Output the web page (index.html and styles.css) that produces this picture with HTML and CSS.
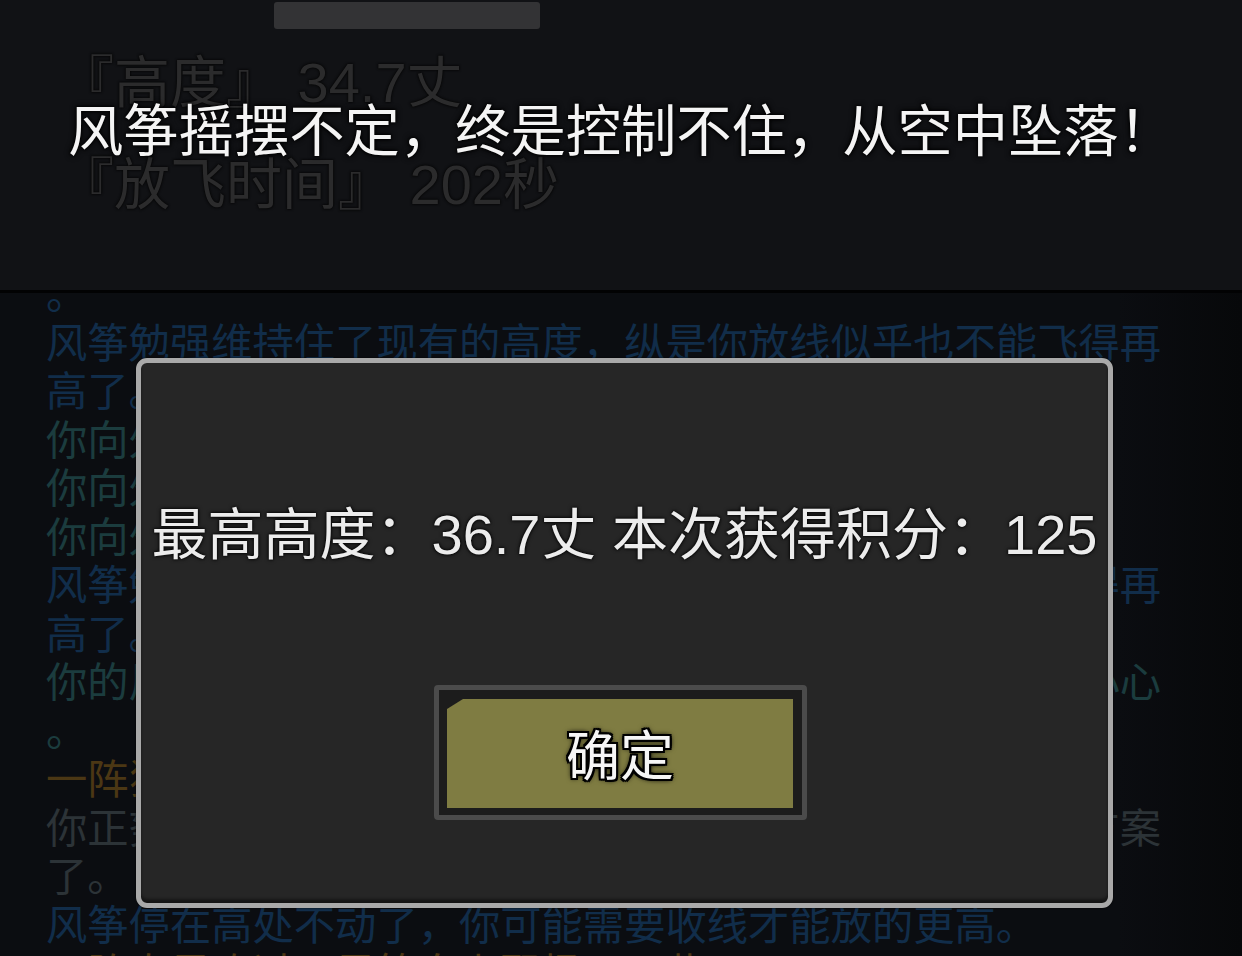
FILE: index.html
```html
<!DOCTYPE html>
<html lang="zh-CN">
<head>
<meta charset="utf-8">
<title>放风筝</title>
<link rel="stylesheet" href="styles.css">
</head>
<body>
<div class="screen">
  <section class="top">
    <div class="handle"></div>
    <div class="stats">
      <div class="stat">『高度』 34.7丈</div>
      <div class="stat">『放飞时间』 202秒</div>
    </div>
    <div class="toast">风筝摇摆不定，终是控制不住，从空中坠落！</div>
  </section>
  <div class="divider"></div>
  <section class="log">
    <div class="log-inner">
      <div class="line blue">。</div>
      <div class="line blue">风筝勉强维持住了现有的高度，纵是你放线似乎也不能飞得再</div>
      <div class="line blue">高了。</div>
      <div class="line teal">你向外放出了一截风筝线。</div>
      <div class="line teal">你向外放出了一截风筝线。</div>
      <div class="line teal">你向外放出了一截风筝线。</div>
      <div class="line blue">风筝勉强维持住了现有的高度，纵是你放线似乎也不能飞得再</div>
      <div class="line blue">高了。</div>
      <div class="line teal">你的风筝越飞越高，周围的人都投来羡慕目光，你也更加小心</div>
      <div class="line teal">。</div>
      <div class="line orange">一阵狂风吹来，风筝剧烈地摇摆起来。</div>
      <div class="line gray">你正努力稳住手中的风筝线，却一时间想不出更好的应对方案</div>
      <div class="line gray">了。</div>
      <div class="line blue">风筝停在高处不动了，你可能需要收线才能放的更高。</div>
      <div class="line orange">一阵春风吹过，风筝向上飘扬了一些。</div>
    </div>
  </section>

  <div class="dialog">
    <div class="result">最高高度：36.7丈 本次获得积分：125</div>
    <div class="btn-frame">
      <div class="btn">确定</div>
    </div>
  </div>
</div>
</body>
</html>
```

FILE: styles.css
```css
* { box-sizing: border-box; margin: 0; padding: 0; }

html, body {
  width: 1242px;
  height: 956px;
  overflow: hidden;
  background: #0b0d11;
}

body {
  font-family: "Liberation Sans", "Noto Sans CJK SC", sans-serif;
  text-spacing-trim: space-all;
}

.screen {
  position: relative;
  width: 1242px;
  height: 956px;
  display: flex;
  flex-direction: column;
}

.top {
  position: relative;
  height: 290px;
  background: #111215;
  display: flex;
  flex-direction: column;
}

.handle {
  margin: 2px 0 0 274px;
  width: 266px;
  height: 27px;
  border-radius: 3px;
  background: #333335;
}

.stats {
  margin: 24px 0 0 58px;
  display: flex;
  flex-direction: column;
  gap: 42px;
}

.stat {
  font-size: 56px;
  line-height: 60px;
  color: #2b2b2c;
  white-space: nowrap;
  text-shadow: 0 0 2px #060606, 0 0 3px #060606;
}

.toast {
  position: absolute;
  left: 68px;
  top: 102px;
  font-size: 55.3px;
  line-height: 60px;
  color: #f4f4f4;
  white-space: nowrap;
  text-shadow: 0 0 2px #000, 0 0 4px #000, 0 0 6px rgba(0,0,0,.8);
}

.divider {
  height: 3px;
  background: #020203;
}

.log {
  flex: 1;
  overflow: hidden;
  background: linear-gradient(to right, #0b0d11 0%, #0b0d11 90%, #07080a 100%);
  padding-left: 46px;
}

.log-inner {
  margin-top: -26px;
}

.line {
  font-family: "Noto Sans CJK SC", sans-serif;
  font-size: 41.3px;
  line-height: 48.5px;
  height: 48.5px;
  white-space: nowrap;
}

.blue { color: #112d4a; }
.teal { color: #1b3c3e; }
.orange { color: #4b3714; }
.gray { color: #2c3337; }

.dialog {
  position: absolute;
  left: 136px;
  top: 358px;
  width: 977px;
  height: 550px;
  border: 5px solid #a9a9a9;
  border-radius: 11px;
  background: #262626;
  box-shadow: inset 0 -4px 3px rgba(0,0,0,.45), 0 0 2px #000;
  display: flex;
  flex-direction: column;
  align-items: center;
  padding-top: 142px;
}

.result {
  font-size: 56px;
  line-height: 60px;
  color: #ececec;
  white-space: nowrap;
  text-shadow: 0 0 2px #000, 0 0 4px #000;
}

.btn-frame {
  margin-top: 120px;
  margin-left: -8px;
  width: 373px;
  height: 135px;
  border: 5px solid #4b4b4b;
  border-radius: 4px;
  background: #1c1c1c;
  padding: 9px 9px 7px 8px;
  display: flex;
}

.btn {
  flex: 1;
  background: #7f7c42;
  clip-path: polygon(16px 0, 100% 0, 100% 100%, 0 100%, 0 10px);
  display: flex;
  align-items: center;
  justify-content: center;
  font-size: 54px;
  color: #f6f6f6;
  padding-bottom: 2px;
  text-shadow: 2px 0 0 #000, -2px 0 0 #000, 0 2px 0 #000, 0 -2px 0 #000,
    2px 2px 0 #000, -2px -2px 0 #000, 2px -2px 0 #000, -2px 2px 0 #000,
    0 0 4px #000, 0 0 6px #000;
}
```
